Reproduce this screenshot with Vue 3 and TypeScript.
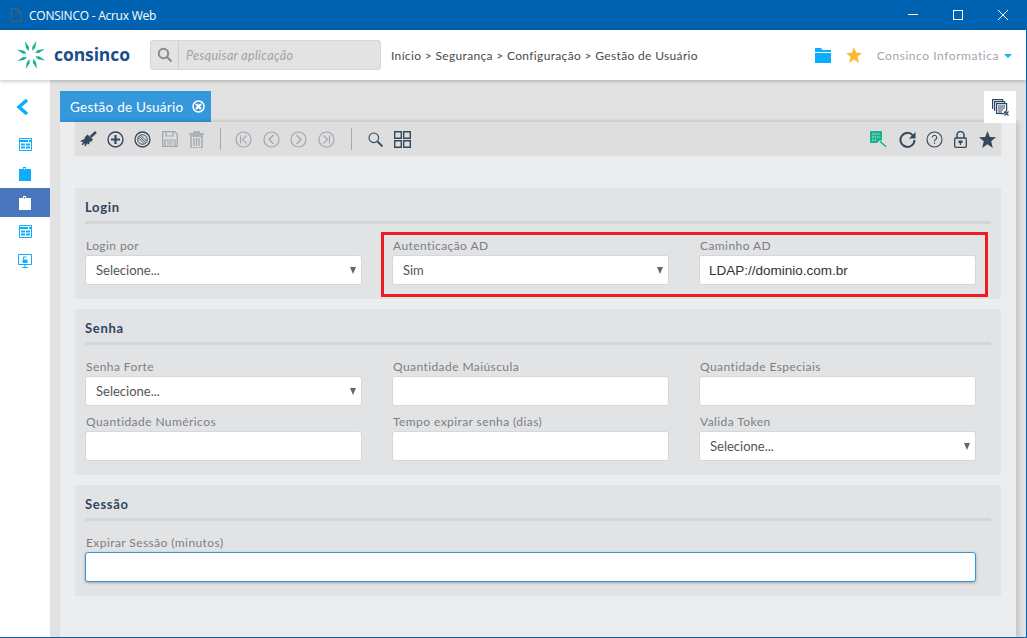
<script setup lang="ts">
interface Field { label: string; value?: string; select?: boolean }
const login: Field[] = [
  { label: 'Login por', value: 'Selecione...', select: true },
  { label: 'Autenticação AD', value: 'Sim', select: true },
  { label: 'Caminho AD', value: 'LDAP://dominio.com.br' },
]
const senha: Field[] = [
  { label: 'Senha Forte', value: 'Selecione...', select: true },
  { label: 'Quantidade Maiúscula' },
  { label: 'Quantidade Especiais' },
  { label: 'Quantidade Numéricos' },
  { label: 'Tempo expirar senha (dias)' },
  { label: 'Valida Token', value: 'Selecione...', select: true },
]
const rays = [0, 45, 90, 135, 180, 225, 270, 315]
</script>

<template>
  <div class="window">
    <div class="titlebar">
      <svg class="doc" width="11" height="14" viewBox="0 0 11 14"><path d="M.5.500h6l4 4v9H.5zM6.500.500v4h4" fill="none" stroke="#5b5b5b"/></svg>
      <span class="wintitle">CONSINCO - Acrux Web</span>
      <div class="winbtns">
        <svg width="10" height="10" viewBox="0 0 10 10"><path d="M0 4.500h10" stroke="#fff"/></svg>
        <svg width="10" height="10" viewBox="0 0 10 10"><rect x=".5" y=".5" width="9" height="9" fill="none" stroke="#fff"/></svg>
        <svg width="10" height="10" viewBox="0 0 10 10"><path d="M0 0l10 10M10 0L0 10" stroke="#fff"/></svg>
      </div>
    </div>

    <header class="topbar">
      <div class="logo">
        <svg width="30" height="30" viewBox="-15 -15 30 30">
          <path v-for="r in rays" :key="r" d="M-.4-4.500L1.500-8 .3-15-1.500-8.500z" fill="#14b08e" :transform="`rotate(${r + 20})`"/>
        </svg>
        <span class="brand">consinco</span>
      </div>
      <div class="search">
        <span class="searchicon">
          <svg width="16" height="16" viewBox="0 0 16 16"><circle cx="6.500" cy="6.500" r="4.700" fill="none" stroke="#8c8c8c" stroke-width="2"/><path d="M10 10l4.500 4.500" stroke="#8c8c8c" stroke-width="2.200"/></svg>
        </span>
        <span class="searchtext">Pesquisar aplicação</span>
      </div>
      <div class="crumbs">Início &gt; Segurança &gt; Configuração &gt; Gestão de Usuário</div>
      <div class="topright">
        <svg width="16" height="15" viewBox="0 0 16 15"><path d="M0 0h6l1.500 2H16v2H0zM0 5h16v10H0z" fill="#0aaefc"/></svg>
        <svg width="16" height="16" viewBox="0 0 24 24"><path d="M12 0l3.300 8.500 8.700.4-6.800 5.600 2.300 9.500L12 18.800 4.500 24l2.300-9.500L0 8.900l8.700-.4z" fill="#fbb934"/></svg>
        <span class="user">Consinco Informatica</span>
        <span class="caret"></span>
      </div>
    </header>

    <div class="body">
      <aside class="sidebar">
        <svg class="back" width="13" height="16" viewBox="0 0 13 16"><path d="M11 1L3 8l8 7" fill="none" stroke="#0aaefc" stroke-width="3.500"/></svg>
        <div class="sideitem">
          <svg width="13" height="13" viewBox="0 0 13 13"><path d="M.5.500h12v12H.5z" fill="none" stroke="#0aaefc"/><path d="M0 2h9v2H0zM10 2h3v2h-3z" fill="#0aaefc"/><path d="M2 5.500h4v2H2zM7 5.500h4v2H7zM2 8.500h4v2H2zM7 8.500h4v2H7z" fill="#0aaefc"/></svg>
        </div>
        <div class="sideitem">
          <svg width="12" height="14" viewBox="0 0 12 14"><path d="M0 2h4V0h3v2h5v12H0z" fill="#0aaefc"/><path d="M4.800 1h1.400v1.500H4.800z" fill="#fff"/></svg>
        </div>
        <div class="sideitem active">
          <svg width="12" height="14" viewBox="0 0 12 14"><path d="M0 2h4V0h3v2h5v12H0z" fill="#fff"/><path d="M4.800 1h1.400v1.500H4.800z" fill="#4a76bd"/></svg>
        </div>
        <div class="sideitem">
          <svg width="13" height="13" viewBox="0 0 13 13"><path d="M.5.500h12v12H.5z" fill="none" stroke="#0aaefc"/><path d="M0 2h9v2H0zM10 2h3v2h-3z" fill="#0aaefc"/><path d="M2 5.500h4v2H2zM7 5.500h4v2H7zM2 8.500h4v2H2zM7 8.500h4v2H7z" fill="#0aaefc"/></svg>
        </div>
        <div class="sideitem">
          <svg width="14" height="14" viewBox="0 0 14 14"><path d="M.5.500h13v10H.5zM4 13.500h6M7 11v2" fill="none" stroke="#0aaefc"/><path d="M4.500 5.500h5v3.500h-5z" fill="#0aaefc"/><path d="M5.500 5.500V3h3" fill="none" stroke="#0aaefc"/></svg>
        </div>
      </aside>

      <main class="content">
        <div class="tabs">
          <div class="tab">
            <span>Gestão de Usuário</span>
            <svg width="13" height="13" viewBox="0 0 13 13"><circle cx="6.500" cy="6.500" r="5.500" fill="none" stroke="#fff" stroke-width="1.500"/><path d="M4 4l5 5M9 4L4 9" stroke="#fff" stroke-width="2.200"/></svg>
          </div>
          <div class="tabaction">
            <svg width="17" height="17" viewBox="0 0 17 17"><path d="M2.600 12V2.600h10V4" fill="none" stroke="#2f4460" stroke-width="1.200"/><path d="M.6 10V.6h10V2" fill="none" stroke="#2f4460" stroke-width="1.200"/><path d="M4.600 14.500V4.600h10v7l-3 3z" fill="#fff" stroke="#2f4460" stroke-width="1.200"/><path d="M6 7h7M6 9h7M6 11h5M6 13h4" stroke="#2f4460"/><path d="M12.500 12.500l4 4M16.500 12.500l-4 4" stroke="#2f4460" stroke-width="1.200"/></svg>
          </div>
        </div>

        <div class="panel">
          <div class="toolbar">
            <span class="tool">
              <svg width="17" height="17" viewBox="0 0 17 17"><path d="M16 1l-5.500 5" stroke="#34495e" stroke-width="2.500"/><path d="M7.500 3.500l5.500 5-2 2.500-1-1-.8 3.500-2-1-1.700 3-1-.8.500-2.500-2.500 2-.8-.8 1.700-2.600-2.400.2-.5-1L5 7.500l-.5-1z" fill="#34495e"/></svg>
            </span>
            <span class="tool">
              <svg width="17" height="17" viewBox="0 0 17 17"><circle cx="8.500" cy="8.500" r="7.500" fill="none" stroke="#34495e" stroke-width="1.400"/><path d="M8.500 4v9M4 8.500h9" stroke="#34495e" stroke-width="2.200"/></svg>
            </span>
            <span class="tool">
              <svg width="17" height="17" viewBox="0 0 17 17"><circle cx="8.500" cy="8.500" r="7.500" fill="none" stroke="#34495e" stroke-width="1.300"/><circle cx="8.500" cy="8.500" r="4.800" fill="none" stroke="#34495e" stroke-width="1"/><path d="M5.200 5.200l6.600 6.600M7 4.500l5.500 5.500M4.500 7l5.500 5.500" stroke="#34495e" stroke-width=".9"/></svg>
            </span>
            <span class="tool">
              <svg width="16" height="16" viewBox="0 0 16 16"><path d="M.7.700h12l2.600 2.600v12H.7z" fill="none" stroke="#a0a7b0" stroke-width="1.300"/><path d="M4 1v4h7V1M3 15V9h10v6" fill="none" stroke="#a0a7b0" stroke-width="1.200"/><path d="M5 11h6M5 13h6" stroke="#a0a7b0"/></svg>
            </span>
            <span class="tool">
              <svg width="15" height="17" viewBox="0 0 15 17"><path d="M0 3h15M5 3V1h5v2M2 5h11v12H2z" fill="none" stroke="#a0a7b0" stroke-width="1.400"/><path d="M5 7v8M7.500 7v8M10 7v8" stroke="#a0a7b0" stroke-width="1.300"/></svg>
            </span>
            <span class="sep"></span>
            <span class="tool nav">
              <svg width="17" height="17" viewBox="0 0 17 17"><circle cx="8.500" cy="8.500" r="7.500" fill="none" stroke="#a0a7b0" stroke-width="1.200"/><path d="M5.500 4.500v8M11.500 4.500l-4 4 4 4" fill="none" stroke="#a0a7b0" stroke-width="1.100"/></svg>
            </span>
            <span class="tool nav">
              <svg width="17" height="17" viewBox="0 0 17 17"><circle cx="8.500" cy="8.500" r="7.500" fill="none" stroke="#a0a7b0" stroke-width="1.200"/><path d="M10.500 4l-4.500 4.500 4.500 4.500" fill="none" stroke="#a0a7b0" stroke-width="1.300"/></svg>
            </span>
            <span class="tool nav">
              <svg width="17" height="17" viewBox="0 0 17 17"><circle cx="8.500" cy="8.500" r="7.500" fill="none" stroke="#a0a7b0" stroke-width="1.200"/><path d="M6.500 4l4.500 4.500L6.500 13" fill="none" stroke="#a0a7b0" stroke-width="1.300"/></svg>
            </span>
            <span class="tool nav">
              <svg width="17" height="17" viewBox="0 0 17 17"><circle cx="8.500" cy="8.500" r="7.500" fill="none" stroke="#a0a7b0" stroke-width="1.200"/><path d="M11.500 4.500v8M5.500 4.500l4 4-4 4" fill="none" stroke="#a0a7b0" stroke-width="1.100"/></svg>
            </span>
            <span class="sep sep2"></span>
            <span class="tool find">
              <svg width="15" height="15" viewBox="0 0 15 15"><circle cx="5.800" cy="5.800" r="4.800" fill="none" stroke="#34495e" stroke-width="1.100"/><path d="M9.500 9.500l5 5" stroke="#34495e" stroke-width="1.800"/></svg>
            </span>
            <span class="tool">
              <svg width="17" height="17" viewBox="0 0 17 17"><path d="M.7.700h6.600v6.600H.7zM9.700.700h6.600v6.600H9.700zM.7 9.700h6.600v6.600H.7zM9.700 9.700h6.600v6.600H9.700z" fill="none" stroke="#34495e" stroke-width="1.400"/></svg>
            </span>
            <span class="spacer"></span>
            <span class="tool">
              <svg width="17" height="16" viewBox="0 0 17 16"><path d="M0 0h12v9.500H9.500L7 12H0z" fill="#14b48f"/><path d="M2 3h8M2 6h8M2 9h4" stroke="#dedede" stroke-dasharray="1.500 1"/><path d="M10 10.500l6 5" stroke="#14b48f" stroke-width="1.600"/></svg>
            </span>
            <span class="tool refresh">
              <svg width="17" height="17" viewBox="0 0 17 17"><path d="M13.800 4.300A7 7 0 1 0 15.500 9" fill="none" stroke="#34495e" stroke-width="2"/><path d="M16.500 1v6.500H10z" fill="#34495e"/></svg>
            </span>
            <span class="tool help">
              <svg width="17" height="17" viewBox="0 0 17 17"><circle cx="8.500" cy="8.500" r="7.500" fill="none" stroke="#34495e" stroke-width="1.100"/><path d="M6.300 6.500a2.200 2.200 0 1 1 3.400 1.900c-.8.500-1.200 1-1.200 2" fill="none" stroke="#34495e" stroke-width="1.100"/><path d="M8 11.700h1v1.300H8z" fill="#34495e"/></svg>
            </span>
            <span class="tool lock">
              <svg width="13" height="17" viewBox="0 0 13 17"><path d="M3 7V4a3.500 3.500 0 0 1 7 0v3" fill="none" stroke="#34495e" stroke-width="1.500"/><rect x=".7" y="7" width="11.600" height="9.300" rx="1" fill="none" stroke="#34495e" stroke-width="1.300"/><path d="M4.500 9.500h4v2.500H7v2H5.800v-2H4.500z" fill="#34495e"/></svg>
            </span>
            <span class="tool star">
              <svg width="17" height="17" viewBox="0 0 24 24"><path d="M12 0l3.300 8.500 8.700.4-6.800 5.600 2.300 9.500L12 18.800 4.500 24l2.300-9.500L0 8.900l8.700-.4z" fill="#34495e"/></svg>
            </span>
          </div>

          <section class="group first">
            <h3 class="title">Login</h3>
            <div class="grid">
              <div v-for="f in login" :key="f.label" class="field">
                <label>{{ f.label }}</label>
                <div class="control" :class="{ select: f.select, plain: !f.select }">{{ f.value }}</div>
              </div>
            </div>
            <div class="highlight"></div>
          </section>

          <section class="group">
            <h3 class="title">Senha</h3>
            <div class="grid">
              <div v-for="f in senha" :key="f.label" class="field">
                <label>{{ f.label }}</label>
                <div class="control" :class="{ select: f.select }">{{ f.value }}</div>
              </div>
            </div>
          </section>

          <section class="group">
            <h3 class="title">Sessão</h3>
            <div class="field">
              <label>Expirar Sessão (minutos)</label>
              <div class="control focused wide"></div>
            </div>
          </section>
        </div>
      </main>
    </div>
  </div>
</template>

<style scoped>
.window {
  width: 1027px;
  height: 638px;
  box-sizing: border-box;
  border-right: 1px solid #0063b1;
  border-bottom: 1px solid #0063b1;
  display: flex;
  flex-direction: column;
  overflow: hidden;
  background: #e2e2e2;
  font-family: Lato, "Open Sans", sans-serif;
}
.titlebar {
  height: 30px;
  flex: none;
  background: #0063b1;
  display: flex;
  align-items: center;
  margin-right: -1px;
  color: #fff;
}
.doc { margin-left: 11px; }
.wintitle {
  margin-left: 7px;
  font: 12px "Open Sans", sans-serif;
  letter-spacing: -0.25px;
}
.winbtns {
  margin-left: auto;
  margin-right: 19px;
  display: flex;
  gap: 35px;
}
.topbar {
  height: 50px;
  flex: none;
  background: #fff;
  display: flex;
  align-items: center;
  box-shadow: 0 1px 4px rgba(0, 0, 0, .25);
  position: relative;
  z-index: 2;
}
.logo {
  display: flex;
  align-items: center;
  width: 150px;
  padding-left: 16px;
  box-sizing: border-box;
}
.brand {
  margin-left: 8px;
  font: 700 17.500px "Open Sans", sans-serif;
  color: #1a4e8a;
  letter-spacing: -0.1px;
  position: relative;
  top: -1px;
}
.search {
  width: 231px;
  height: 30px;
  box-sizing: border-box;
  background: #e3e3e3;
  border: 1px solid #d6d6d6;
  border-radius: 3px;
  display: flex;
  align-items: center;
}
.searchicon {
  width: 28px;
  height: 100%;
  flex: none;
  box-sizing: border-box;
  border-right: 1px solid #cfcfcf;
  display: flex;
  align-items: center;
  justify-content: center;
}
.searchtext {
  margin-left: 7px;
  font: italic 12.500px Lato, sans-serif;
  color: #a2a2a2;
  letter-spacing: .33px;
}
.crumbs {
  margin-left: 10px;
  font-size: 12px;
  color: #4a4a4a;
  letter-spacing: .34px;
}
.topright {
  margin-left: auto;
  display: flex;
  align-items: center;
  padding-right: 14px;
}
.topright svg:nth-child(2) { margin-left: 15px; }
.user {
  margin-left: 15px;
  font-size: 12px;
  color: #a0a6b0;
  letter-spacing: .55px;
}
.caret {
  margin-left: 5px;
  margin-top: 2px;
  border-left: 4px solid transparent;
  border-right: 4px solid transparent;
  border-top: 4px solid #0aaefc;
}
.body {
  flex: 1;
  display: flex;
  min-height: 0;
}
.sidebar {
  width: 50px;
  flex: none;
  background: #fff;
  display: flex;
  flex-direction: column;
  align-items: stretch;
}
.back {
  margin: 19px 0 15px 16px;
  flex: none;
}
.sideitem {
  height: 29px;
  display: flex;
  align-items: center;
  justify-content: center;
}
.sideitem.active { background: #4a76bd; }
.content {
  flex: 1;
  min-width: 0;
  padding: 11px 10px 0;
  display: flex;
  flex-direction: column;
}
.tabs {
  height: 31px;
  flex: none;
  display: flex;
  justify-content: space-between;
}
.tab {
  width: 151px;
  box-sizing: border-box;
  background: #3498db;
  color: #fff;
  display: flex;
  align-items: center;
  padding-left: 10px;
  font-size: 13.500px;
  letter-spacing: .25px;
  gap: 9px;
}
.tabaction {
  width: 32px;
  height: 32px;
  background: #fff;
  display: flex;
  align-items: center;
  justify-content: center;
  position: relative;
  z-index: 1;
}
.panel {
  flex: 1;
  background: #ecedef;
  padding: 0 15px;
  box-shadow: 3px 0 5px rgba(0, 0, 0, .14);
}
.toolbar {
  height: 34px;
  background: #dedede;
  display: flex;
  align-items: center;
  box-shadow: 0 -1px 3px rgba(0, 0, 0, .06);
}
.tool {
  width: 27px;
  flex: none;
  display: flex;
  align-items: center;
  justify-content: center;
}
.tool.nav { width: 27.500px; }
.sep {
  width: 1px;
  height: 22px;
  flex: none;
  background: #a9a9a9;
  margin: 0 9px 0 10px;
}
.sep2 { margin: 0 10px 0 11px; }
.spacer { flex: 1; }
.tool.refresh { width: 30px; }
.tool.help { width: 25px; }
.tool.lock { width: 26px; }
.tool.star { width: 28px; }
.group {
  position: relative;
  background: #e2e3e5;
  border-radius: 2px;
  padding: 0 10px 14px;
  margin-bottom: 10px;
}
.group.first { margin-top: 32px; }
.title {
  margin: 0;
  padding: 11px 0 7px;
  height: 15px;
  box-sizing: content-box;
  line-height: 17px;
  font-size: 13px;
  font-weight: 700;
  color: #2f4460;
  letter-spacing: .7px;
  border-bottom: 3px solid #d4d5d7;
}
.grid {
  display: grid;
  grid-template-columns: repeat(3, 277px);
  column-gap: 30px;
}
.grid .field:nth-child(n+4) { padding-top: 8px; }
.field {
  padding-top: 14px;
}
.field label {
  display: block;
  height: 17px;
  padding-left: 1px;
  line-height: 15px;
  font-size: 12px;
  color: #7c7f83;
  letter-spacing: .42px;
}
.control {
  height: 30px;
  box-sizing: border-box;
  background: #fff;
  border: 1px solid #d6d7da;
  border-radius: 3px;
  padding-left: 10px;
  display: flex;
  align-items: center;
  font-size: 13px;
  color: #555;
  position: relative;
}
.control.plain {
  font-family: "Liberation Sans", Arial, sans-serif;
  font-size: 13.500px;
  padding-left: 9px;
  color: #333;
}
.control.select::after {
  content: "";
  position: absolute;
  right: 5px;
  top: 11px;
  border-left: 3.500px solid transparent;
  border-right: 3.500px solid transparent;
  border-top: 7px solid #666;
}
.control.wide { width: 891px; }
.control.focused {
  border: 1px solid #3498db;
  box-shadow: 0 1px 3px rgba(0, 0, 0, .3);
}
.highlight {
  position: absolute;
  left: 306px;
  top: 44px;
  width: 607px;
  height: 65px;
  box-sizing: border-box;
  border: 3px solid #ed1c24;
  pointer-events: none;
}
</style>

<style>
html, body { margin: 0; background: #e2e2e2; }
</style>
